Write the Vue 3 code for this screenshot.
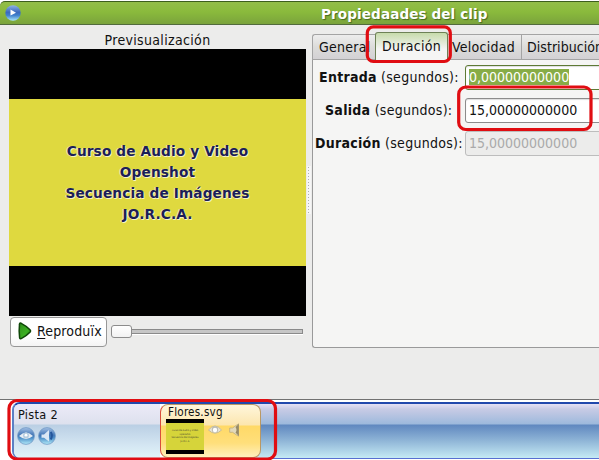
<script setup>
const tabs = [
  { name: 'General', cls: 'general' },
  { name: 'Duración', cls: 'active' },
  { name: 'Velocidad', cls: 'speed' },
  { name: 'Distribución', cls: 'layout' },
]
const fields = [
  { name: 'Entrada', value: '0,00000000000', cls: 'focused' },
  { name: 'Salida', value: '15,00000000000', cls: 'normal' },
  { name: 'Duración', value: '15,00000000000', cls: 'disabled' },
]
const lines = ['Curso de Audio y Video', 'Openshot', 'Secuencia de Imágenes', 'JO.R.C.A.']
</script>

<template>
  <div class="screen">
    <header class="titlebar">
      <svg class="app-icon" width="16" height="16" viewBox="0 0 16 16">
        <defs>
          <linearGradient id="orb" x1="0" y1="0" x2="0" y2="1">
            <stop offset="0" stop-color="#8fb2e6" />
            <stop offset=".45" stop-color="#3b69bd" />
            <stop offset=".65" stop-color="#3f80cc" />
            <stop offset="1" stop-color="#a9e6fa" />
          </linearGradient>
        </defs>
        <circle cx="8" cy="8" r="7.7" fill="url(#orb)" />
        <path d="M5.5 4.5 L11 7.7 L5.5 10.5 Z" fill="#fff" />
      </svg>
      <h1>Propiedaades del clip</h1>
    </header>

    <main class="dialog">
      <section class="preview">
        <div class="caption">Previsualización</div>
        <div class="video">
          <div class="frame">
            <p v-for="l in lines" :key="l">{{ l }}</p>
          </div>
        </div>
        <div class="controls">
          <button class="play">
            <svg width="14" height="18" viewBox="0 0 14 18">
              <defs>
                <linearGradient id="play" x1="0" y1="0" x2="1" y2="1">
                  <stop offset="0" stop-color="#2f8f1c" />
                  <stop offset=".6" stop-color="#3cb022" />
                  <stop offset="1" stop-color="#1d7610" />
                </linearGradient>
              </defs>
              <path d="M1.5 2.2 Q1.6 .6 3.2 1.3 Q8.6 4 12.2 8 Q13 9 12.2 9.9 Q8 14.2 3.2 16.6 Q1.8 17 1.6 15.6 Q.8 9 1.5 2.2 Z" fill="url(#play)" stroke="#0f4708" stroke-width="1.5" />
            </svg>
            <span><u>R</u>eproduïx</span>
          </button>
          <div class="slider"><i class="thumb"></i><i class="rail"></i></div>
        </div>
      </section>

      <div class="grip"></div>

      <section class="notebook">
        <nav class="tabs">
          <div v-for="t in tabs" :key="t.name" class="tab" :class="t.cls"><span>{{ t.name }}</span></div>
        </nav>
        <div class="panel">
          <div v-for="f in fields" :key="f.name" class="row" :class="f.cls">
            <label><b>{{ f.name }}</b> (segundos):</label>
            <div class="entry"><span>{{ f.value }}</span></div>
          </div>
        </div>
      </section>
    </main>

    <footer class="timeline">
      <div class="track">
        <div class="head">
          <div class="name">Pista 2</div>
          <div class="icons">
            <svg width="18" height="18" viewBox="0 0 18 18">
              <defs>
                <linearGradient id="ball" x1="0" y1="0" x2="0" y2="1">
                  <stop offset="0" stop-color="#a3c0e4" />
                  <stop offset=".45" stop-color="#4175b6" />
                  <stop offset=".6" stop-color="#4a8cc6" />
                  <stop offset="1" stop-color="#b4ecfa" />
                </linearGradient>
              </defs>
              <circle cx="9" cy="9" r="8.4" fill="url(#ball)" stroke="#7199c5" stroke-width=".8" />
              <path d="M2 9 Q9 1.8 16 9 Q9 14.8 2 9Z" fill="#e6edf4" />
              <circle cx="9" cy="8.4" r="3" fill="#b6cde0" />
              <circle cx="9" cy="8.2" r="1.4" fill="#fff" />
            </svg>
            <svg width="18" height="18" viewBox="0 0 18 18">
              <circle cx="9" cy="9" r="8.4" fill="url(#ball)" stroke="#7199c5" stroke-width=".8" />
              <path d="M3.5 7.5 H6 L11 3 V14.5 L6 10.8 H3.5 Z" fill="#dbe8f5" />
              <path d="M12.7 5 Q15 8.5 12.7 12.5" fill="none" stroke="#24569b" stroke-width="2" />
            </svg>
          </div>
        </div>
        <div class="clip">
          <div class="clip-name">Flores.svg</div>
          <div class="clip-body">
            <div class="thumbnail">
              <div><p v-for="l in lines" :key="l">{{ l }}</p></div>
            </div>
            <svg class="eye" width="14" height="10" viewBox="0 0 14 10">
              <path d="M.5 5 Q7 -3 13.5 5 Q7 11.5 .5 5Z" fill="#e9e4d6" stroke="#c4b993" stroke-width=".9" />
              <circle cx="7" cy="4.4" r="3.2" fill="#bdbdb2" />
              <circle cx="7" cy="5" r="2.2" fill="#fff" />
            </svg>
            <svg class="speaker" width="12" height="14" viewBox="0 0 12 14">
              <path d="M.7 5 H3.5 L9.5 .8 V13.2 L3.5 9.3 H.7 Z" fill="#e3dabb" stroke="#b8a878" stroke-width=".7" />
              <path d="M9.8 1 V13 L6.5 9.6 Q8.5 7 6.5 4Z" fill="#978b66" />
            </svg>
          </div>
        </div>
        <div class="lane"></div>
      </div>
    </footer>

    <svg class="marks" width="599" height="460" viewBox="0 0 599 460">
      <g fill="none" stroke="#e00d12" stroke-width="3.2">
        <rect x="367.3" y="26.8" width="83" height="34.7" rx="6" />
        <rect x="458.7" y="87" width="132.3" height="42.5" rx="7" />
        <rect x="9" y="400.5" width="266.5" height="58.5" rx="8" />
      </g>
    </svg>
  </div>
</template>

<style>
body { background: #fff; overflow: hidden; }
</style>

<style scoped>
* { box-sizing: border-box; }
p, h1 { margin: 0; }
.screen {
  position: relative; width: 599px; height: 460px; overflow: hidden;
  display: flex; flex-direction: column; background: #fff; color: #111;
  font: 14px/16px "DejaVu Sans Condensed", "DejaVu Sans", sans-serif; font-stretch: condensed;
  white-space: nowrap;
}
.titlebar {
  flex: none; height: 24px; margin-top: 1px; padding-left: 5px; display: flex; align-items: center;
  border-top: 1px solid #3d5e1d; border-bottom: 1px solid #526b3d; border-top-left-radius: 5px;
  background: linear-gradient(#93bd49, #8aba3c 45%, #7aa33c);
}
.app-icon { flex: none; }
h1 { margin-left: 300px; padding-top: 1px; font: bold 13.6px/18px "DejaVu Sans", sans-serif; font-stretch: normal; letter-spacing: .08px; color: #fff; text-shadow: 1px 1px 1px #47691f; }
.dialog { flex: none; height: 375px; display: flex; background: #ececeb; border-bottom: 1px solid #717171; }
.preview { width: 297px; margin-left: 9px; padding-top: 7px; flex: none; }
.caption { height: 17px; text-align: center; line-height: 17px; letter-spacing: .33px; }
.video { height: 267px; padding: 50px 0; background: #000; }
.frame { height: 167px; padding-top: 42px; background: #dfd93f; text-align: center; color: #1c1e57; }
.frame p { font: bold 13.7px/21px "DejaVu Sans", sans-serif; font-stretch: normal; letter-spacing: .12px; text-shadow: 1px 1px 0 #f5f2c8, -1px 0 0 #f0ecae; }
.controls { display: flex; padding: 1px 0 0 1px; }
.play {
  width: 97px; height: 30px; padding: 0 0 2px 7px; display: flex; align-items: center; gap: 5px;
  border: 1px solid #979797; border-radius: 4px; background: linear-gradient(#fff, #fff 60%, #f4f4f4);
  font: inherit; font-stretch: condensed; color: #111; letter-spacing: .15px;
}
.play u { text-underline-offset: 2px; }
.slider { display: flex; align-items: center; height: 29px; margin-left: 4px; }
.thumb { width: 21px; height: 13px; border: 1px solid #8c8c8c; border-radius: 3px; background: linear-gradient(#fff, #f2f2f2); }
.rail { width: 171px; height: 5px; border: 1px solid #8a8a8a; border-left: 0; background: #c6c6c6; box-shadow: 0 1px #fff; }
.grip { flex: none; width: 4px; height: 48px; margin: 141px 1px 0; background: radial-gradient(circle, #b0b0b0 .6px, #f6f6f6 1px) 0 0 / 3px 3px; }
.notebook { flex: none; width: 287px; height: 323px; padding-top: 7px; }
.tabs { height: 28px; display: flex; align-items: flex-end; letter-spacing: .28px; }
.tab {
  flex: none; height: 26px; border: 1px solid #a4a4a4; border-left-width: 0; line-height: 25px; padding-left: 6px;
  background: linear-gradient(#ededed, #dcdcda 50%, #d3d1d4);
}
.general { width: 63px; border-left-width: 1px; border-right: 0; border-top-left-radius: 3px; }
.active {
  width: 73px; height: 28px; padding-left: 6px; line-height: 27px; border: 1px solid #6d8156; border-bottom: 0;
  border-radius: 3px 3px 0 0; background: linear-gradient(#c7dbac, #f5f5f4 60%);
}
.speed { width: 74px; padding-left: 4px; }
.layout { width: 78px; padding-left: 5px; letter-spacing: .05px; border-right: 0; }
.panel { height: 288px; padding-top: 5px; border-left: 1px solid #9a9a9a; border-bottom: 1px solid #9a9a9a; border-bottom-left-radius: 3px; background: #f5f5f4; }
.row { display: flex; align-items: center; height: 25px; margin-bottom: 8px; }
.row label { flex: none; width: 152px; padding: 0 0 2px 6px; letter-spacing: .28px; }
.row.normal label { padding-left: 12px; }
.row.disabled label { padding-left: 2px; }
.entry { flex: none; width: 160px; height: 25px; border: 1px solid #8c8c8c; border-radius: 3px; padding: 3px 0 0 3px; line-height: 16px; background: #fff; box-shadow: inset 0 1px 1px #ddd; }
.focused .entry { border-color: #5e7a35; }
.focused .entry span { display: inline-block; height: 16px; background: #87ac46; color: #fff; }
.disabled .entry { background: #ececeb; border-color: #bdbdbd; color: #aaa; box-shadow: none; }
.timeline { flex: 1; padding: 2px 0 0 12px; }
.track {
  height: 57px; display: flex; border-top: 2px solid #2148ac; border-bottom: 1px solid #586fd1;
  border-left: 2px solid #5b7fc4; border-radius: 8px 0 0 8px; overflow: hidden;
}
.head { flex: none; width: 146px; padding: 3px 0 0 4px; background: linear-gradient(#eceaf8, #dde1ee 20px, #bacfe4 21px, #d5e7f3 42px, #e1f5f8); font-size: 12.6px; letter-spacing: .3px; }
.name { height: 20px; line-height: 15px; }
.icons { display: flex; gap: 3px; margin-left: -1px; }
.clip { position: relative; z-index: 1; flex: none; width: 101px; padding: 1px 0 0 7px; border: 1px solid #ba9864; border-left-color: #d94d3b; border-radius: 8px; background: linear-gradient(#fff6dc, #fce6af 20px, #ffd967 21px, #ffdf7b 38px, #fff0bd); }
.clip-name { height: 13px; line-height: 12px; font-size: 11.6px; letter-spacing: .2px; }
.clip-body { display: flex; margin-left: -2px; }
.thumbnail { width: 38px; height: 35px; padding: 4px 0; background: #000; }
.thumbnail div { height: 27px; padding-top: 6px; background: #d6d43a; color: #4a4a32; text-align: center; }
.thumbnail p { font-size: 2.5px; line-height: 3.5px; }
.eye { margin: 6px 0 0 4px; }
.speaker { margin: 4px 0 0 7px; }
.lane { flex: 1; margin-left: -8px; background: linear-gradient(#e5e1f5, #c8cbe5 5px, #9db9dc 20px, #6088bf 21px, #8ab0d4 35px, #c5eaf4 54px); }
.marks { position: absolute; left: 0; top: 0; z-index: 3; pointer-events: none; }
</style>
